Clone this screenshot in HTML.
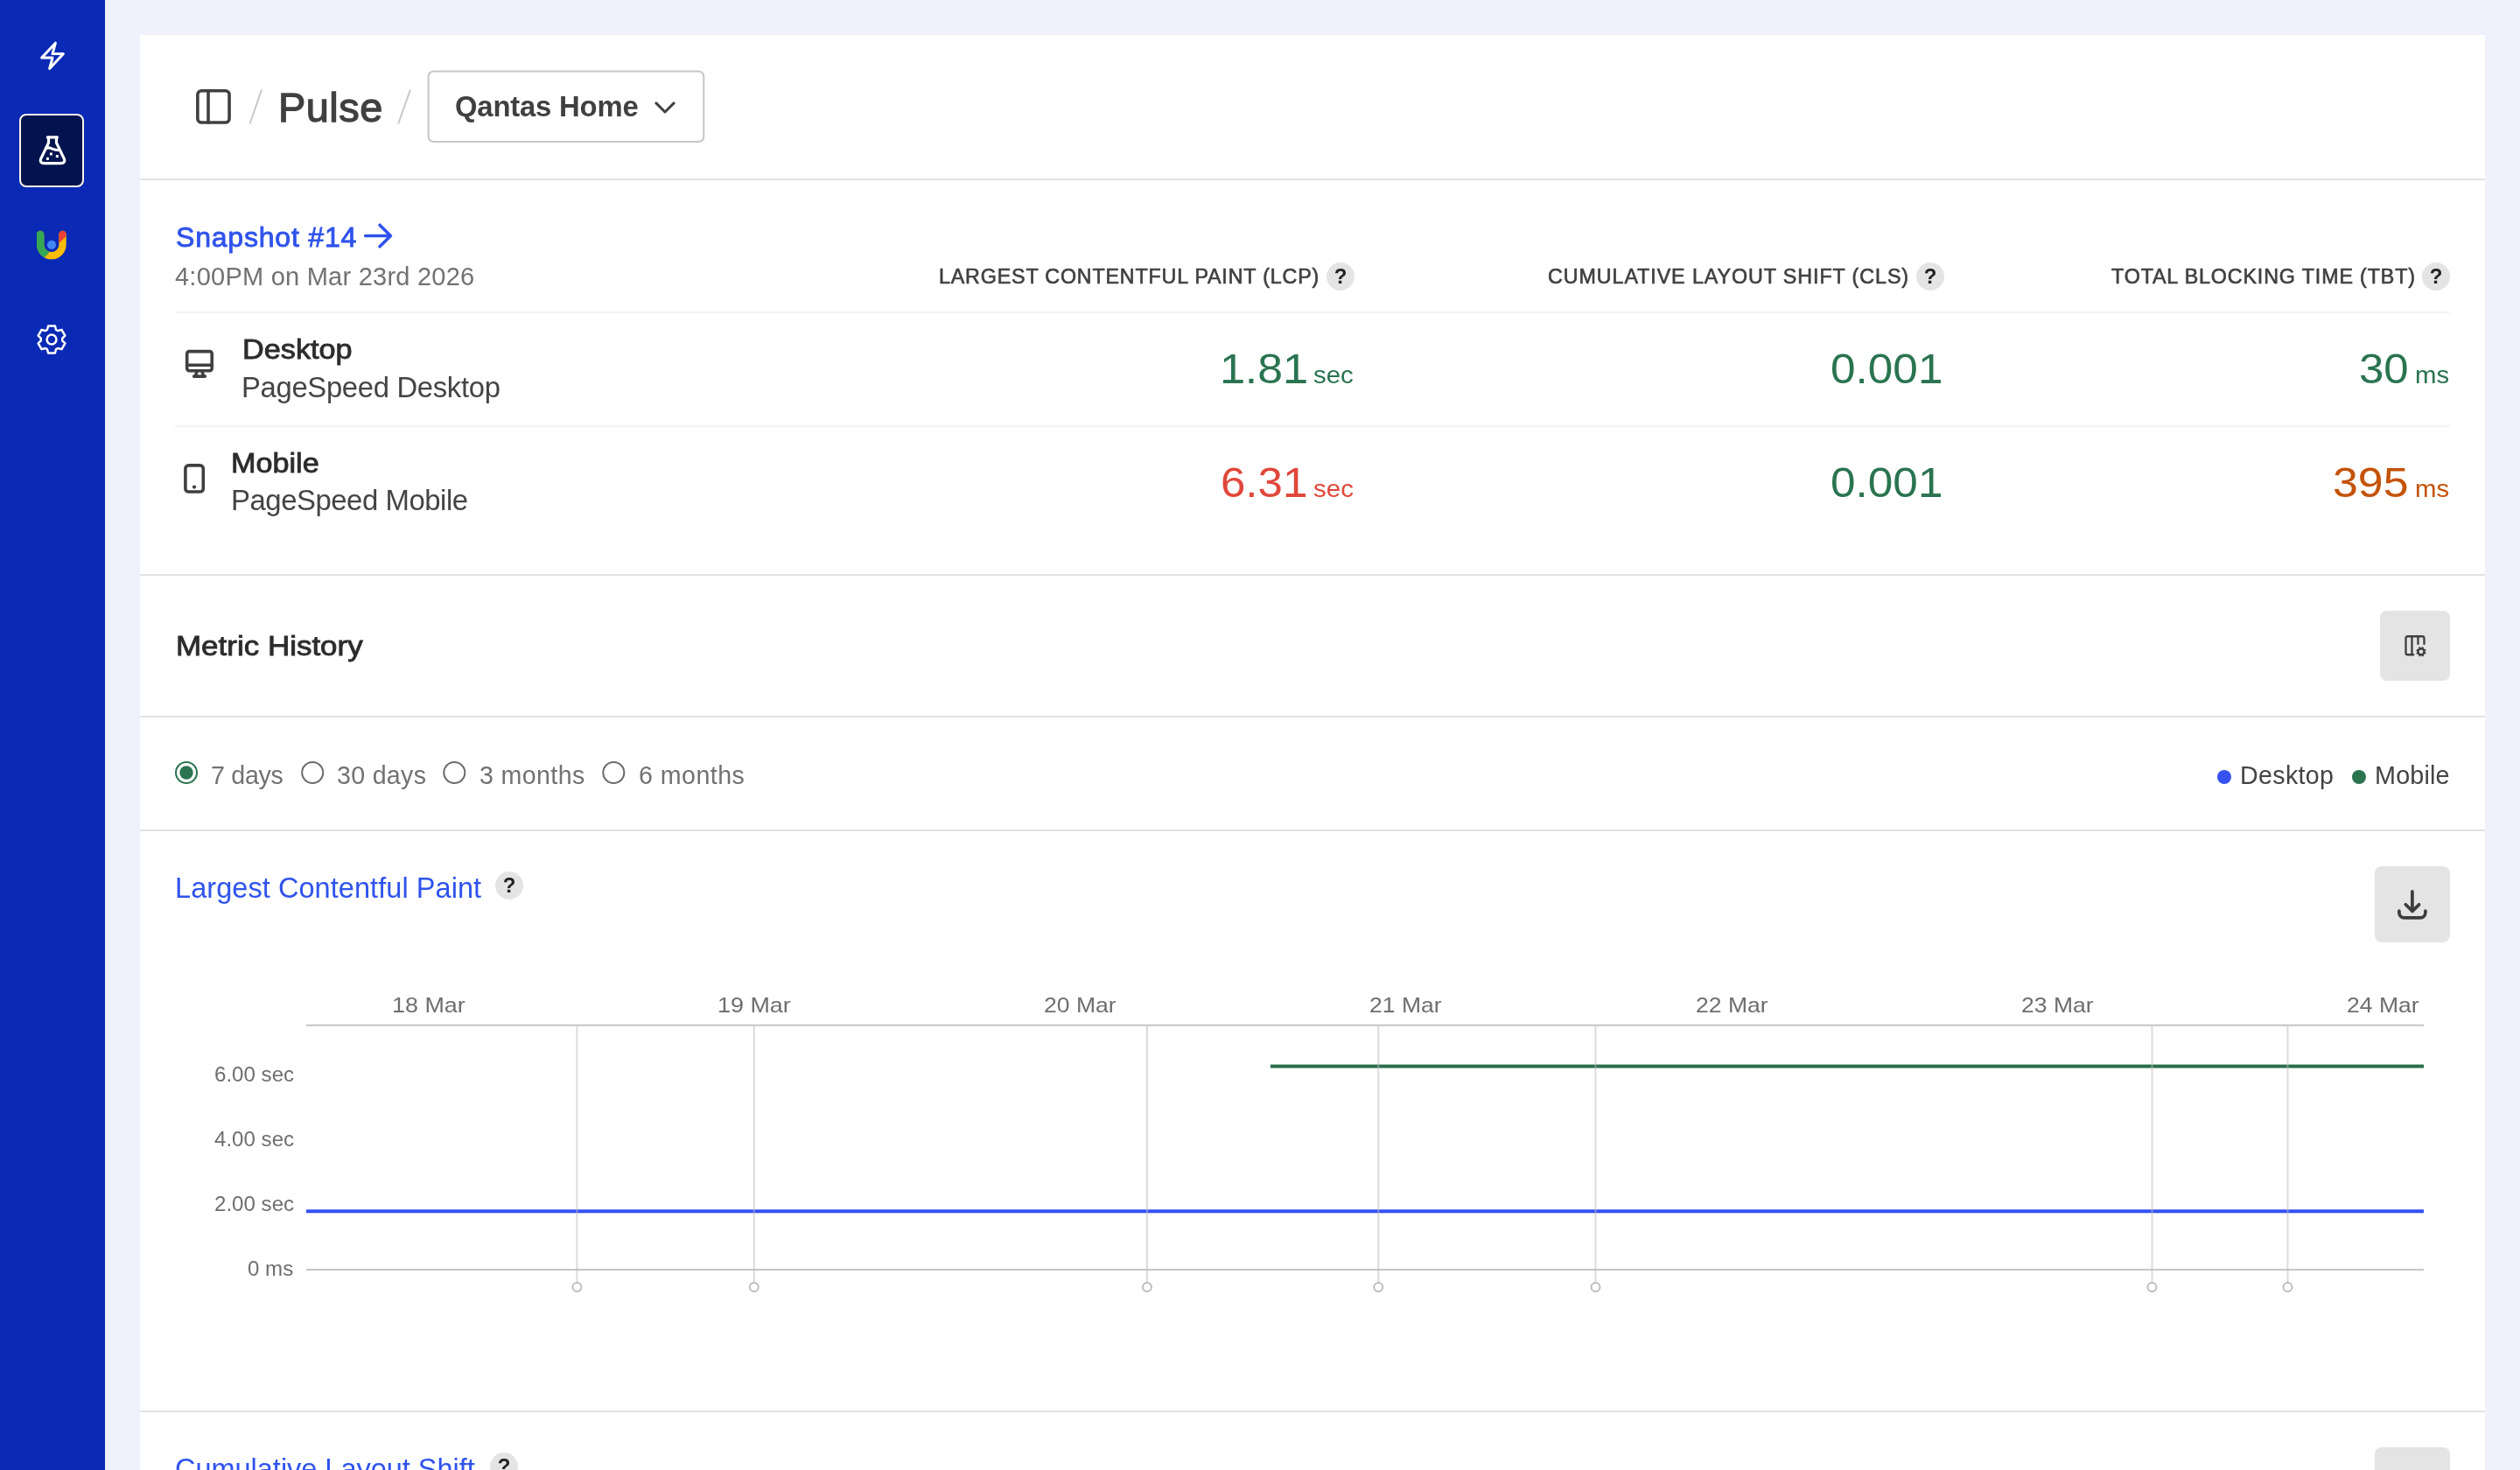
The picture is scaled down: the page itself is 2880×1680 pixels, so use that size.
<!DOCTYPE html>
<html><head><meta charset="utf-8"><title>Pulse</title>
<style>
html,body{margin:0;padding:0;width:2880px;height:1680px;overflow:hidden;background:#eff2fc;}
svg{position:absolute;left:0;top:0;}
.t{position:absolute;white-space:nowrap;transform-origin:0 0;will-change:transform;font-family:"Liberation Sans",sans-serif;}
.q{width:40px;text-align:center;font-size:24px;line-height:24px;font-weight:700;color:#222;}
</style></head><body>
<svg width="2880" height="1680" viewBox="0 0 2880 1680">
<rect x="0" y="0" width="120" height="1680" fill="#0a2ab5"/>
<rect x="23" y="131" width="72" height="82" rx="7" fill="#03134f" stroke="#fbf5e6" stroke-width="2"/>
<path transform="translate(42 45.8) scale(1.5)" d="m3.75 13.5 10.5-11.25L12 10.5h8.25L9.75 21.75 12 13.5H3.75z" fill="none" stroke="#fff" stroke-width="2" stroke-linejoin="round" stroke-linecap="round"/>
<g fill="none" stroke="#fff" stroke-width="3.2" stroke-linejoin="round" stroke-linecap="round"><path d="M54.3 156.9H65.4"/><path d="M55.5 157V163.2L46.6 181.6Q45 186.6 50.5 186.6H69.5Q75 186.6 73.4 181.6L64.5 163.2V157"/><path d="M52.6 169.6C56.5 167.6 58.5 169.8 61 170.6S65 171.8 67.6 171.4"/></g><g fill="#fff"><rect x="56.9" y="174.5" width="3" height="3"/><rect x="52.9" y="179.9" width="3" height="3"/><rect x="63.8" y="177.1" width="3" height="3"/></g>
<defs><clipPath id="cg"><polygon points="20,250 56,250 56,288.96 40.1,306 20,306"/></clipPath><clipPath id="cr"><polygon points="62,250 90,250 90,256.4 62,283"/></clipPath></defs>
<path d="M46.15 267.9V279.5A12.7 12.7 0 0 0 71.55 279.5V267.9" fill="none" stroke="#fbbc05" stroke-width="8.3" stroke-linecap="round"/>
<path d="M46.15 267.9V279.5A12.7 12.7 0 0 0 71.55 279.5V267.9" fill="none" stroke="#34a853" stroke-width="8.3" stroke-linecap="round" clip-path="url(#cg)"/>
<path d="M46.15 267.9V279.5A12.7 12.7 0 0 0 71.55 279.5V267.9" fill="none" stroke="#ea4335" stroke-width="8.3" stroke-linecap="round" clip-path="url(#cr)"/>
<circle cx="59" cy="279.8" r="5.1" fill="#4285f4"/>
<path d="M54 376.8L55.1 372.5L62.9 372.5L64 376.8A12.27 12.27 0 0 1 66.2 378.07L70.47 376.87L74.37 383.63L71.2 386.73A12.27 12.27 0 0 1 71.2 389.27L74.37 392.37L70.47 399.13L66.2 397.93A12.27 12.27 0 0 1 64 399.2L62.9 403.5L55.1 403.5L54 399.2A12.27 12.27 0 0 1 51.8 397.93L47.53 399.13L43.63 392.37L46.8 389.27A12.27 12.27 0 0 1 46.8 386.73L43.63 383.63L47.53 376.87L51.8 378.07A12.27 12.27 0 0 1 54 376.8Z" fill="none" stroke="#fff" stroke-width="2.5" stroke-linejoin="round"/>
<circle cx="59" cy="388" r="5.4" fill="none" stroke="#fff" stroke-width="2.5"/>
<rect x="160" y="40" width="2680" height="1640" fill="#fff"/>
<rect x="160" y="204" width="2680" height="2" fill="#e2e2e2"/>
<rect x="160" y="656" width="2680" height="2" fill="#e2e2e2"/>
<rect x="160" y="818" width="2680" height="2" fill="#e2e2e2"/>
<rect x="160" y="948" width="2680" height="2" fill="#e2e2e2"/>
<rect x="160" y="1612" width="2680" height="2" fill="#e2e2e2"/>
<rect x="200" y="356" width="2600" height="2" fill="#f3f3f3"/>
<rect x="200" y="486" width="2600" height="2" fill="#f3f3f3"/>
<g fill="none" stroke="#404040" stroke-width="3.6" stroke-linecap="round" stroke-linejoin="round"><rect x="225.86" y="103.8" width="36.2" height="36.2" rx="4.5"/><path d="M238 103.8V140"/></g>
<g stroke="#c9c9c9" stroke-width="2"><path d="M285.6 141.5L299 102.4"/><path d="M455.2 141.5L469 102.4"/></g>
<rect x="489.6" y="81.5" width="314.7" height="80.5" rx="6" fill="#fff" stroke="#c6c6c6" stroke-width="2"/>
<path d="M749.9 117.9L760 128L770.1 117.9" fill="none" stroke="#404040" stroke-width="3" stroke-linecap="round" stroke-linejoin="round"/>
<path d="M417.7 269.5H446.2M434 257.2L446.4 269.5L434 281.7" fill="none" stroke="#2f53ec" stroke-width="3.6" stroke-linecap="round" stroke-linejoin="round"/>
<g fill="none" stroke="#404040" stroke-width="3.6" stroke-linecap="round" stroke-linejoin="round"><rect x="213.7" y="401.6" width="28.5" height="22.1" rx="2.6"/><path d="M213.7 417.3H242.2"/><path d="M221.6 430.1H234.4"/><path d="M225.2 423.8L223.4 430.1"/><path d="M230.8 423.8L232.6 430.1"/></g>
<rect x="211.9" y="531.9" width="20.4" height="30.1" rx="3.6" fill="none" stroke="#404040" stroke-width="3.6"/>
<circle cx="222" cy="556.6" r="2.1" fill="#404040"/>
<circle cx="1532" cy="316" r="16" fill="#e4e4e4"/>
<circle cx="2206" cy="316" r="16" fill="#e4e4e4"/>
<circle cx="2784" cy="316" r="16" fill="#e4e4e4"/>
<circle cx="582" cy="1012" r="16" fill="#e4e4e4"/>
<circle cx="576" cy="1676" r="16" fill="#e4e4e4"/>
<rect x="2720" y="698" width="80" height="80" rx="8" fill="#e4e4e4"/>
<rect x="2714" y="990" width="86" height="87" rx="8" fill="#e4e4e4"/>
<rect x="2714" y="1654" width="86" height="87" rx="8" fill="#e4e4e4"/>
<g transform="translate(2746 723.75) scale(1.1667)" fill="none" stroke="#404040" stroke-width="2" stroke-linecap="round" stroke-linejoin="round"><path d="M10.5 21H5a2 2 0 0 1-2-2V5a2 2 0 0 1 2-2h14a2 2 0 0 1 2 2v5.5"/><path d="m14.3 19.6 1-.4"/><path d="M15 3v7.5"/><path d="m15.2 16.9-.9-.3"/><path d="m16.6 21.7.3-.9"/><path d="m16.8 15.3-.4-1"/><path d="m19.1 15.2.3-.9"/><path d="m19.6 21.7-.4-1"/><path d="m20.7 16.8 1-.4"/><path d="m21.7 19.4-.9-.3"/><path d="M9 3v18"/><circle cx="18" cy="18" r="3"/></g>
<g fill="none" stroke="#3c3c3c" stroke-width="3.7" stroke-linecap="round" stroke-linejoin="round"><path d="M2756.9 1018.8V1041"/><path d="M2749.3 1033.8L2756.9 1041.3L2764.6 1033.8"/><path d="M2741.9 1041.1V1043A5.8 5.8 0 0 0 2747.7 1048.8H2766.1A5.8 5.8 0 0 0 2771.9 1043V1041.1"/></g>
<circle cx="213" cy="883" r="12" fill="#fff" stroke="#2a7450" stroke-width="2"/><circle cx="213" cy="883" r="7.7" fill="#2a7450"/>
<circle cx="357.2" cy="883" r="12" fill="#fff" stroke="#6b6b6b" stroke-width="2"/>
<circle cx="519.3" cy="883" r="12" fill="#fff" stroke="#6b6b6b" stroke-width="2"/>
<circle cx="701.3" cy="883" r="12" fill="#fff" stroke="#6b6b6b" stroke-width="2"/>
<circle cx="2542" cy="888" r="8" fill="#3653f0"/>
<circle cx="2696" cy="888" r="8" fill="#2a7450"/>
<rect x="350" y="1170.7" width="2420" height="2" fill="#c4c4c4"/>
<rect x="350" y="1450.1" width="2420" height="2" fill="#c4c4c4"/>
<rect x="350" y="1382.3" width="2420" height="4" fill="#3350f2"/>
<rect x="1452" y="1216.6" width="1318" height="4" fill="#2a6e4b"/>
<rect x="658.4" y="1172.7" width="2" height="293.3" fill="rgba(190,190,190,0.55)"/>
<circle cx="659.4" cy="1471" r="5" fill="#fff" stroke="#bdbdbd" stroke-width="2"/>
<rect x="860.8" y="1172.7" width="2" height="293.3" fill="rgba(190,190,190,0.55)"/>
<circle cx="861.8" cy="1471" r="5" fill="#fff" stroke="#bdbdbd" stroke-width="2"/>
<rect x="1310" y="1172.7" width="2" height="293.3" fill="rgba(190,190,190,0.55)"/>
<circle cx="1311" cy="1471" r="5" fill="#fff" stroke="#bdbdbd" stroke-width="2"/>
<rect x="1574.3" y="1172.7" width="2" height="293.3" fill="rgba(190,190,190,0.55)"/>
<circle cx="1575.3" cy="1471" r="5" fill="#fff" stroke="#bdbdbd" stroke-width="2"/>
<rect x="1822.5" y="1172.7" width="2" height="293.3" fill="rgba(190,190,190,0.55)"/>
<circle cx="1823.5" cy="1471" r="5" fill="#fff" stroke="#bdbdbd" stroke-width="2"/>
<rect x="2458.5" y="1172.7" width="2" height="293.3" fill="rgba(190,190,190,0.55)"/>
<circle cx="2459.5" cy="1471" r="5" fill="#fff" stroke="#bdbdbd" stroke-width="2"/>
<rect x="2613.5" y="1172.7" width="2" height="293.3" fill="rgba(190,190,190,0.55)"/>
<circle cx="2614.5" cy="1471" r="5" fill="#fff" stroke="#bdbdbd" stroke-width="2"/>
</svg>
<svg width="2880" height="1680" viewBox="0 0 2880 1680" style="z-index:2"><rect x="1398.40" y="434.10" width="22.21" height="3.90" fill="#2a7450"/><rect x="1470.40" y="434.10" width="22.21" height="3.90" fill="#2a7450"/><rect x="1469.90" y="564.10" width="22.21" height="3.90" fill="#e0473a"/><rect x="2195.96" y="434.13" width="22.07" height="3.87" fill="#2a7450"/><rect x="2195.96" y="564.13" width="22.07" height="3.87" fill="#2a7450"/><rect x="450.62" y="1155.11" width="10.76" height="1.89" fill="#6e6e6e"/><rect x="822.62" y="1155.11" width="10.76" height="1.89" fill="#6e6e6e"/><rect x="1582.12" y="1155.11" width="10.76" height="1.89" fill="#6e6e6e"/></svg>
<div class="t" style="left:318.1px;top:100.2px;font-size:46.9px;line-height:46.9px;font-weight:400;-webkit-text-stroke:1.27px #404040;letter-spacing:0.5px;color:#404040">Pulse</div>
<div class="t" style="left:520.4px;top:106.4px;font-size:32.8px;line-height:32.8px;font-weight:700;letter-spacing:-0.18px;color:#404040">Qantas Home</div>
<div class="t" style="left:200.6px;top:255.3px;font-size:32.1px;line-height:32.1px;font-weight:400;-webkit-text-stroke:0.87px #2f53ec;letter-spacing:0.76px;color:#2f53ec">Snapshot #14</div>
<div class="t" style="left:200.4px;top:301.8px;font-size:29.0px;line-height:29.0px;font-weight:400;letter-spacing:0.24px;color:#727272">4:00PM on Mar 23rd 2026</div>
<div class="t" style="left:276.8px;top:383.8px;font-size:31.2px;line-height:31.2px;font-weight:400;-webkit-text-stroke:0.84px #2c2c2c;letter-spacing:0px;color:#2c2c2c;transform:scaleX(1.0982)">Desktop</div>
<div class="t" style="left:276.0px;top:426.5px;font-size:32.8px;line-height:32.8px;font-weight:400;letter-spacing:-0.31px;color:#444444">PageSpeed Desktop</div>
<div class="t" style="left:264.4px;top:513.5px;font-size:31.7px;line-height:31.7px;font-weight:400;-webkit-text-stroke:0.86px #2c2c2c;letter-spacing:0px;color:#2c2c2c;transform:scaleX(1.0791)">Mobile</div>
<div class="t" style="left:263.9px;top:556.4px;font-size:32.9px;line-height:32.9px;font-weight:400;letter-spacing:-0.46px;color:#444444">PageSpeed Mobile</div>
<div class="t" style="left:1073.3px;top:304.7px;font-size:23.3px;line-height:23.3px;font-weight:400;-webkit-text-stroke:0.63px #404040;letter-spacing:0.81px;color:#404040">LARGEST CONTENTFUL PAINT (LCP)</div>
<div class="t" style="left:1769.1px;top:304.7px;font-size:23.3px;line-height:23.3px;font-weight:400;-webkit-text-stroke:0.63px #404040;letter-spacing:0.91px;color:#404040">CUMULATIVE LAYOUT SHIFT (CLS)</div>
<div class="t" style="left:2412.5px;top:304.7px;font-size:23.3px;line-height:23.3px;font-weight:400;-webkit-text-stroke:0.63px #404040;letter-spacing:0.85px;color:#404040">TOTAL BLOCKING TIME (TBT)</div>
<div class="t" style="left:1393.7px;top:397.1px;font-size:48.7px;line-height:48.7px;font-weight:400;letter-spacing:0px;color:#2a7450;transform:scaleX(1.0625)">1.81</div>
<div class="t" style="left:1501.0px;top:414.8px;font-size:27.9px;line-height:27.9px;font-weight:400;letter-spacing:0px;color:#2a7450;transform:scaleX(1.0548)">sec</div>
<div class="t" style="left:1395.0px;top:527.1px;font-size:48.7px;line-height:48.7px;font-weight:400;letter-spacing:0px;color:#e0473a;transform:scaleX(1.0478)">6.31</div>
<div class="t" style="left:1500.9px;top:544.8px;font-size:27.9px;line-height:27.9px;font-weight:400;letter-spacing:0px;color:#e0473a;transform:scaleX(1.0571)">sec</div>
<div class="t" style="left:2092.2px;top:397.4px;font-size:48.4px;line-height:48.4px;font-weight:400;letter-spacing:0px;color:#2a7450;transform:scaleX(1.0607)">0.001</div>
<div class="t" style="left:2092.2px;top:527.4px;font-size:48.4px;line-height:48.4px;font-weight:400;letter-spacing:0px;color:#2a7450;transform:scaleX(1.0607)">0.001</div>
<div class="t" style="left:2696.0px;top:397.4px;font-size:48.4px;line-height:48.4px;font-weight:400;letter-spacing:0px;color:#2a7450;transform:scaleX(1.054)">30</div>
<div class="t" style="left:2760.3px;top:415.1px;font-size:27.5px;line-height:27.5px;font-weight:400;letter-spacing:0px;color:#2a7450;transform:scaleX(1.0676)">ms</div>
<div class="t" style="left:2666.2px;top:527.4px;font-size:48.4px;line-height:48.4px;font-weight:400;letter-spacing:0px;color:#c45308;transform:scaleX(1.0714)">395</div>
<div class="t" style="left:2760.3px;top:545.1px;font-size:27.5px;line-height:27.5px;font-weight:400;letter-spacing:0px;color:#c45308;transform:scaleX(1.0676)">ms</div>
<div class="t" style="left:200.6px;top:723.4px;font-size:31.8px;line-height:31.8px;font-weight:400;-webkit-text-stroke:0.86px #2c2c2c;letter-spacing:0px;color:#2c2c2c;transform:scaleX(1.0995)">Metric History</div>
<div class="t" style="left:241.0px;top:872.1px;font-size:28.6px;line-height:28.6px;font-weight:400;letter-spacing:-0.28px;color:#727272">7 days</div>
<div class="t" style="left:385.2px;top:872.1px;font-size:28.6px;line-height:28.6px;font-weight:400;letter-spacing:0.3px;color:#727272">30 days</div>
<div class="t" style="left:548.2px;top:872.1px;font-size:28.6px;line-height:28.6px;font-weight:400;letter-spacing:0.37px;color:#727272">3 months</div>
<div class="t" style="left:729.8px;top:872.1px;font-size:28.6px;line-height:28.6px;font-weight:400;letter-spacing:0.46px;color:#727272">6 months</div>
<div class="t" style="left:2560.2px;top:872.1px;font-size:28.6px;line-height:28.6px;font-weight:400;letter-spacing:0.35px;color:#444444">Desktop</div>
<div class="t" style="left:2714.1px;top:872.1px;font-size:28.8px;line-height:28.8px;font-weight:400;letter-spacing:0.16px;color:#444444">Mobile</div>
<div class="t" style="left:199.9px;top:998.8px;font-size:32.5px;line-height:32.5px;font-weight:400;letter-spacing:0.06px;color:#2f53ec">Largest Contentful Paint</div>
<div class="t" style="left:200.1px;top:1662.5px;font-size:32.5px;line-height:32.5px;font-weight:400;letter-spacing:-0.02px;color:#2f53ec">Cumulative Layout Shift</div>
<div class="t" style="left:447.6px;top:1138.3px;font-size:23.6px;line-height:23.6px;font-weight:400;letter-spacing:0px;color:#6e6e6e;transform:scaleX(1.1408)">18 Mar</div>
<div class="t" style="left:819.8px;top:1138.3px;font-size:23.6px;line-height:23.6px;font-weight:400;letter-spacing:0px;color:#6e6e6e;transform:scaleX(1.1408)">19 Mar</div>
<div class="t" style="left:1193.1px;top:1138.3px;font-size:23.6px;line-height:23.6px;font-weight:400;letter-spacing:0px;color:#6e6e6e;transform:scaleX(1.125)">20 Mar</div>
<div class="t" style="left:1565.3px;top:1138.3px;font-size:23.6px;line-height:23.6px;font-weight:400;letter-spacing:0px;color:#6e6e6e;transform:scaleX(1.125)">21 Mar</div>
<div class="t" style="left:1937.5px;top:1138.3px;font-size:23.6px;line-height:23.6px;font-weight:400;letter-spacing:0px;color:#6e6e6e;transform:scaleX(1.125)">22 Mar</div>
<div class="t" style="left:2309.6px;top:1138.3px;font-size:23.6px;line-height:23.6px;font-weight:400;letter-spacing:0px;color:#6e6e6e;transform:scaleX(1.125)">23 Mar</div>
<div class="t" style="left:2681.8px;top:1138.3px;font-size:23.6px;line-height:23.6px;font-weight:400;letter-spacing:0px;color:#6e6e6e;transform:scaleX(1.125)">24 Mar</div>
<div class="t" style="left:245.0px;top:1216.1px;font-size:24.1px;line-height:24.1px;font-weight:400;letter-spacing:0px;color:#6e6e6e">6.00 sec</div>
<div class="t" style="left:245.0px;top:1290.1px;font-size:24.1px;line-height:24.1px;font-weight:400;letter-spacing:0px;color:#6e6e6e">4.00 sec</div>
<div class="t" style="left:245.0px;top:1364.1px;font-size:24.1px;line-height:24.1px;font-weight:400;letter-spacing:0px;color:#6e6e6e">2.00 sec</div>
<div class="t" style="left:283.0px;top:1438.1px;font-size:24.1px;line-height:24.1px;font-weight:400;letter-spacing:0px;color:#6e6e6e">0 ms</div>
<div class="t q" style="left:1512px;top:304px">?</div>
<div class="t q" style="left:2186px;top:304px">?</div>
<div class="t q" style="left:2764px;top:304px">?</div>
<div class="t q" style="left:562px;top:1000px">?</div>
<div class="t q" style="left:556px;top:1664px">?</div>
<script>(function(){var w=window.innerWidth;if(w&&Math.abs(w-2880)>2){document.documentElement.style.zoom=(w/2880);}})();</script>
</body></html>
